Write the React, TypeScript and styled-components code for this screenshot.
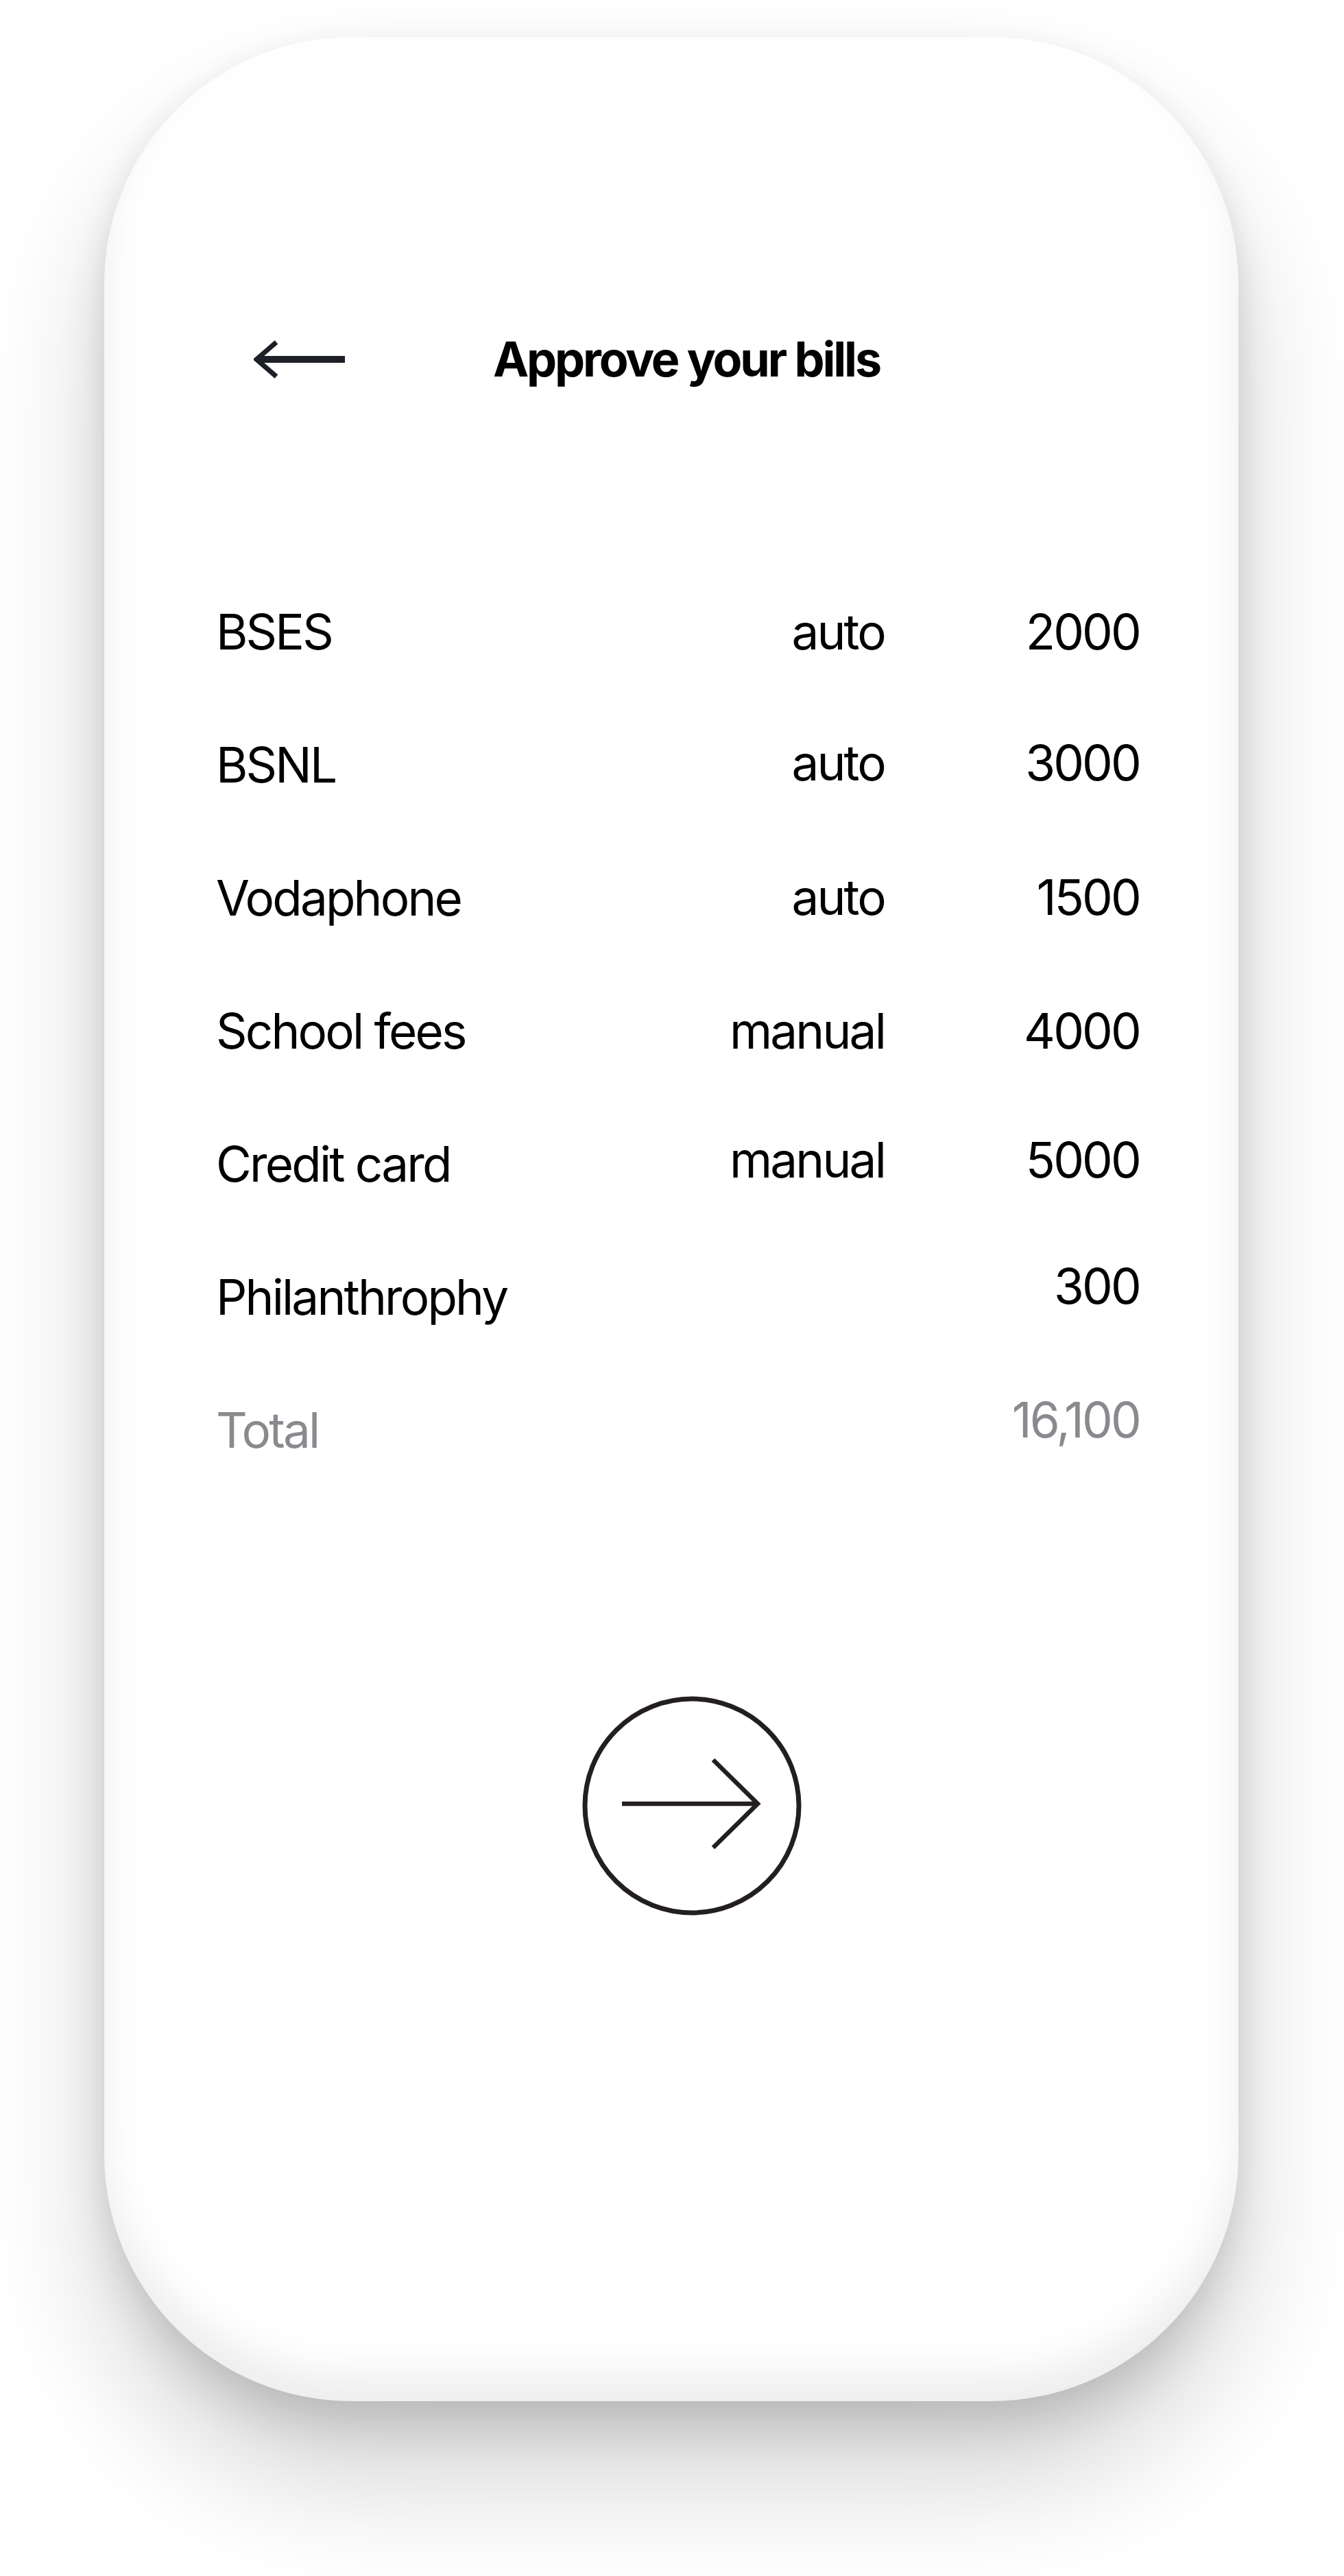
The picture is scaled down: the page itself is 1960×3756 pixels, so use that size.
import styled, { createGlobalStyle } from "styled-components";

interface Bill {
  name: string;
  mode?: string;
  amount: string;
  lift?: number;
}

const bills: Bill[] = [
  { name: "BSES", mode: "auto", amount: "2000" },
  { name: "BSNL", mode: "auto", amount: "3000", lift: 3 },
  { name: "Vodaphone", mode: "auto", amount: "1500", lift: 1 },
  { name: "School fees", mode: "manual", amount: "4000" },
  { name: "Credit card", mode: "manual", amount: "5000", lift: 6 },
  { name: "Philanthrophy", amount: "300", lift: 16 },
];

const GlobalStyle = createGlobalStyle`
  html, body {
    margin: 0;
    padding: 0;
    background: #ffffff;
  }

  body {
    font-family: Inter, "Noto Sans", "Liberation Sans", sans-serif;
    color: #000000;
  }
`;

const Page = styled.div`
  width: 1960px;
  height: 3756px;
  padding: 54px 0 0 152px;
  box-sizing: border-box;
  overflow: hidden;
`;

const Phone = styled.div`
  width: 1654px;
  height: 3447px;
  box-sizing: border-box;
  padding: 435px 144px 0 163px;
  background: #ffffff;
  border-radius: 360px;

  display: flex;
  flex-direction: column;

  box-shadow: 0 40px 60px rgba(0, 0, 0, 0.1), 0 110px 180px rgba(0, 0, 0, 0.18),
    0 0 40px rgba(0, 0, 0, 0.04), inset 0 -40px 60px rgba(0, 0, 0, 0.07);
`;

const Header = styled.div`
  display: flex;
  align-items: center;
  height: 70px;
  padding-left: 55px;
  gap: 216px;
`;

const BackButton = styled.button`
  border: none;
  background: none;
  padding: 0;
  display: flex;
  cursor: pointer;
`;

const Title = styled.h1`
  margin: 0;
  font-size: 70px;
  line-height: 1;
  font-weight: 700;
  letter-spacing: -0.045em;
  color: #000000;
`;

const List = styled.div`
  margin-top: 326px;
  display: flex;
  flex-direction: column;
  gap: 122px;
`;

const Row = styled.div<{ muted?: boolean }>`
  display: grid;
  grid-template-columns: 1fr 260px 372px;
  align-items: start;
  height: 72px;
  font-size: 71px;
  line-height: 72px;
  letter-spacing: -0.04em;
  color: ${(props) => (props.muted ? "#8a8a8e" : "#000000")};
`;

const Cell = styled.span<{ lift?: number }>`
  text-align: right;
  transform: translateY(${(props) => -(props.lift ?? 0)}px);
`;

const Name = styled.span`
  text-align: left;
`;

const NextWrap = styled.div`
  margin-top: 352px;
  display: flex;
  justify-content: center;
  padding-left: 41px;
`;

const NextButton = styled.button`
  border: none;
  background: none;
  padding: 0;
  width: 320px;
  height: 320px;
  display: flex;
  cursor: pointer;
`;

function BackArrow() {
  return (
    <svg width="133" height="56" viewBox="0 0 133 56">
      <rect x="6" y="23" width="127" height="10" fill="#1e2027" />
      <polyline
        points="33,3 4,28 33,53"
        fill="none"
        stroke="#1e2027"
        strokeWidth="7"
        strokeLinejoin="miter"
      />
    </svg>
  );
}

function NextIcon() {
  return (
    <svg width="320" height="320" viewBox="0 0 320 320">
      <circle cx="160" cy="160" r="156" fill="none" stroke="#231f20" strokeWidth="7" />
      <line x1="58" y1="157" x2="256" y2="157" stroke="#231f20" strokeWidth="6.5" />
      <polyline
        points="191,93 256,157 191,221"
        fill="none"
        stroke="#231f20"
        strokeWidth="6.5"
      />
    </svg>
  );
}

export default function App() {
  return (
    <>
      <GlobalStyle />
      <Page>
        <Phone>
          <Header>
            <BackButton aria-label="Back">
              <BackArrow />
            </BackButton>
            <Title>Approve your bills</Title>
          </Header>

          <List>
            {bills.map((bill) => (
              <Row key={bill.name}>
                <Name>{bill.name}</Name>
                <Cell lift={bill.lift}>{bill.mode ?? ""}</Cell>
                <Cell lift={bill.lift}>{bill.amount}</Cell>
              </Row>
            ))}
            <Row muted>
              <Name>Total</Name>
              <Cell />
              <Cell lift={15}>16,100</Cell>
            </Row>
          </List>

          <NextWrap>
            <NextButton aria-label="Continue">
              <NextIcon />
            </NextButton>
          </NextWrap>
        </Phone>
      </Page>
    </>
  );
}
